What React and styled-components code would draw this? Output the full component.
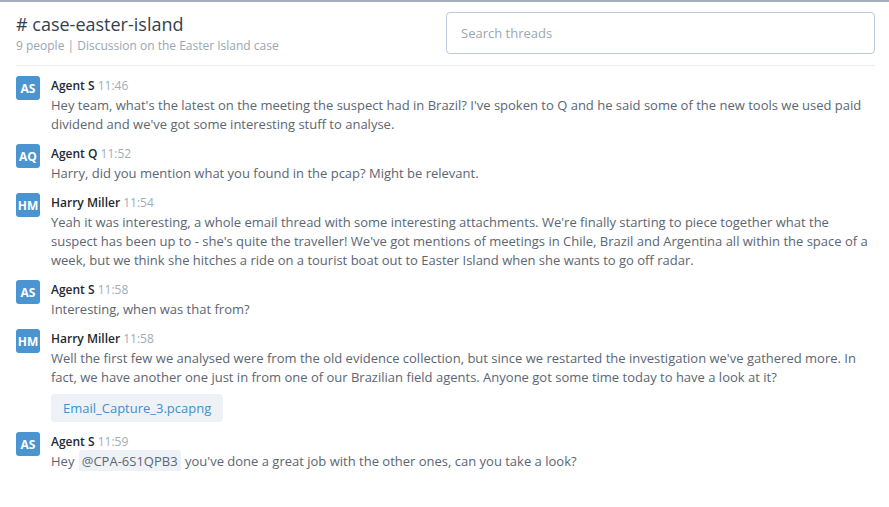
import styled, { createGlobalStyle } from 'styled-components';

const GlobalStyle = createGlobalStyle`
  html, body {
    margin: 0;
    padding: 0;
    background: #fff;
    font-family: 'Open Sans', 'Liberation Sans', sans-serif;
  }
`;

const Page = styled.div`
  border-top: 2px solid #a4b0be;
  padding: 0 14px 0 16px;
`;

const Header = styled.header`
  display: flex;
  justify-content: space-between;
  align-items: flex-start;
  padding: 10px 0 10px;
  border-bottom: 1px solid #eceef0;
`;

const Titles = styled.div`
  display: flex;
  flex-direction: column;
  padding-top: 1px;
`;

const Title = styled.h1`
  margin: 0;
  font-size: 18px;
  font-weight: 400;
  line-height: 22px;
  color: #36404c;
`;

const Sub = styled.div`
  font-size: 12px;
  line-height: 18px;
  margin-top: 2px;
  color: #9ba6b2;
`;

const Search = styled.input`
  box-sizing: border-box;
  width: 429px;
  height: 42px;
  border: 1px solid #bccad7;
  border-radius: 4px;
  padding: 0 14px;
  font-family: inherit;
  font-size: 13px;
  color: #36404c;
  outline: none;

  &::placeholder {
    color: #9ba6b2;
  }
`;

const List = styled.div`
  display: flex;
  flex-direction: column;
  gap: 10px;
  padding-top: 10px;
`;

const Row = styled.div`
  display: flex;
  gap: 11px;
`;

const Avatar = styled.div`
  flex: none;
  width: 24px;
  height: 24px;
  border-radius: 3px;
  background: #4a95d1;
  color: #fff;
  font-size: 12px;
  font-weight: 700;
  display: flex;
  align-items: center;
  justify-content: center;
`;

const Body = styled.div`
  flex: 1;
  min-width: 0;
`;

const Meta = styled.div`
  font-size: 12px;
  line-height: 20px;
  color: #24292f;
  font-weight: 600;
`;

const Time = styled.span`
  font-weight: 400;
  color: #a2acb6;
`;

const Text = styled.div`
  font-size: 13px;
  line-height: 19px;
  color: #5b6672;
`;

const Mention = styled.span`
  background: #eef2f6;
  border-radius: 3px;
  padding: 2px 3px;
  margin: 0 1px;
`;

const Attachment = styled.a`
  display: inline-block;
  margin-top: 7px;
  padding: 0 12px;
  height: 28px;
  line-height: 28px;
  border-radius: 4px;
  background: #eef2f6;
  color: #3e8fd0;
  font-size: 13px;
  text-decoration: none;
`;

const messages = [
  {
    initials: 'AS',
    name: 'Agent S',
    time: '11:46',
    text: "Hey team, what's the latest on the meeting the suspect had in Brazil? I've spoken to Q and he said some of the new tools we used paid dividend and we've got some interesting stuff to analyse.",
  },
  {
    initials: 'AQ',
    name: 'Agent Q',
    time: '11:52',
    text: 'Harry, did you mention what you found in the pcap? Might be relevant.',
  },
  {
    initials: 'HM',
    name: 'Harry Miller',
    time: '11:54',
    text: "Yeah it was interesting, a whole email thread with some interesting attachments. We're finally starting to piece together what the suspect has been up to - she's quite the traveller! We've got mentions of meetings in Chile, Brazil and Argentina all within the space of a week, but we think she hitches a ride on a tourist boat out to Easter Island when she wants to go off radar.",
  },
  {
    initials: 'AS',
    name: 'Agent S',
    time: '11:58',
    text: 'Interesting, when was that from?',
  },
  {
    initials: 'HM',
    name: 'Harry Miller',
    time: '11:58',
    text: "Well the first few we analysed were from the old evidence collection, but since we restarted the investigation we've gathered more. In fact, we have another one just in from one of our Brazilian field agents. Anyone got some time today to have a look at it?",
    file: 'Email_Capture_3.pcapng',
  },
  {
    initials: 'AS',
    name: 'Agent S',
    time: '11:59',
    mention: '@CPA-6S1QPB3',
    text: "you've done a great job with the other ones, can you take a look?",
  },
];

export default function App() {
  return (
    <>
      <GlobalStyle />
      <Page>
        <Header>
          <Titles>
            <Title># case-easter-island</Title>
            <Sub>9 people | Discussion on the Easter Island case</Sub>
          </Titles>
          <Search placeholder="Search threads" />
        </Header>
        <List>
          {messages.map((m, i) => (
            <Row key={i}>
              <Avatar>{m.initials}</Avatar>
              <Body>
                <Meta>
                  {m.name} <Time>{m.time}</Time>
                </Meta>
                <Text>
                  {m.mention ? (
                    <>
                      Hey <Mention>{m.mention}</Mention> {m.text}
                    </>
                  ) : (
                    m.text
                  )}
                </Text>
                {m.file && <Attachment href="#">{m.file}</Attachment>}
              </Body>
            </Row>
          ))}
        </List>
      </Page>
    </>
  );
}
